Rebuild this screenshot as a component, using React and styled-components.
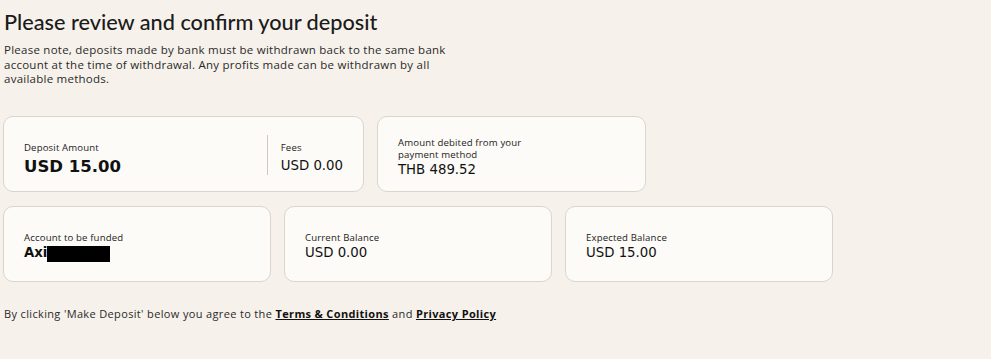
import styled, { createGlobalStyle } from "styled-components";

const GlobalStyle = createGlobalStyle`
  html, body {
    margin: 0;
    padding: 0;
    background: #f6f2eb;
    color: #1b1b1b;
    font-family: "Open Sans", "Noto Sans", sans-serif;
  }
`;

const Page = styled.main`
  padding: 9px 3px 0;
  width: 991px;
  height: 359px;
  box-sizing: border-box;
`;

const Title = styled.h1`
  margin: 0 0 0 1px;
  font-family: Lato, "Open Sans", sans-serif;
  font-size: 21.7px;
  font-weight: 500;
  line-height: 26px;
`;

const Note = styled.p`
  margin: 8px 0 0 1px;
  max-width: 445px;
  font-size: 11.5px;
  letter-spacing: 0.25px;
  line-height: 14.6px;
  color: #2a2a2a;
`;

const Row = styled.div`
  display: flex;
  gap: 13px;
  margin-top: ${(p) => p.$top}px;
`;

const Card = styled.section`
  box-sizing: border-box;
  width: ${(p) => p.$w}px;
  height: 76px;
  background: #fdfbf7;
  border: 1px solid #dbd4ca;
  border-radius: 10px;
  padding: 0 20px;
  display: flex;
  align-items: center;
`;

const Field = styled.div`
  display: flex;
  flex-direction: column;
  flex: ${(p) => (p.$grow ? 1 : "none")};
  margin-top: ${(p) => p.$shift || 0}px;
`;

const Divider = styled.div`
  width: 1px;
  height: 40px;
  background: #cfc8bd;
  margin: 3px 13px 0 0;
`;

const Label = styled.span`
  font-size: 9.6px;
  letter-spacing: 0.15px;
  line-height: 12px;
  color: #222;
  max-width: ${(p) => p.$max || "none"};
`;

const Value = styled.span`
  font-family: "DejaVu Sans", Verdana, sans-serif;
  font-size: ${(p) => (p.$big ? "16.5px" : "13.3px")};
  font-weight: ${(p) => (p.$bold ? 700 : 400)};
  line-height: ${(p) => (p.$big ? "21px" : "17px")};
  margin-top: ${(p) => p.$gap || 0}px;
  color: #111;
  display: flex;
  align-items: center;
`;

const Redacted = styled.span`
  display: inline-block;
  width: 63px;
  height: 16px;
  background: #000;
  margin-left: 0;
  margin-top: 2px;
`;

const Footer = styled.p`
  margin: 24px 0 0 1px;
  font-size: 11px;
  letter-spacing: 0.35px;
  color: #2a2a2a;
`;

const Link = styled.a`
  color: #111;
  font-weight: 700;
  text-decoration: underline;
`;

export default function App() {
  return (
    <Page>
      <GlobalStyle />
      <Title>Please review and confirm your deposit</Title>
      <Note>
        Please note, deposits made by bank must be withdrawn back to the same
        bank account at the time of withdrawal. Any profits made can be
        withdrawn by all available methods.
      </Note>

      <Row $top={29}>
        <Card $w={361}>
          <Field $grow $shift={11}>
            <Label>Deposit Amount</Label>
            <Value $big $bold $gap={2}>USD 15.00</Value>
          </Field>
          <Divider />
          <Field $shift={9}>
            <Label>Fees</Label>
            <Value $gap={3}>USD 0.00</Value>
          </Field>
        </Card>
        <Card $w={269}>
          <Field $shift={7}>
            <Label $max="135px">Amount debited from your payment method</Label>
            <Value>THB 489.52</Value>
          </Field>
        </Card>
      </Row>

      <Row $top={14}>
        <Card $w={268}>
          <Field $shift={6}>
            <Label>Account to be funded</Label>
            <Value $bold>
              Axi<Redacted />
            </Value>
          </Field>
        </Card>
        <Card $w={268}>
          <Field $shift={6}>
            <Label>Current Balance</Label>
            <Value>USD 0.00</Value>
          </Field>
        </Card>
        <Card $w={268}>
          <Field $shift={6}>
            <Label>Expected Balance</Label>
            <Value>USD 15.00</Value>
          </Field>
        </Card>
      </Row>

      <Footer>
        By clicking 'Make Deposit' below you agree to the{" "}
        <Link href="#">Terms &amp; Conditions</Link> and{" "}
        <Link href="#">Privacy Policy</Link>
      </Footer>
    </Page>
  );
}
